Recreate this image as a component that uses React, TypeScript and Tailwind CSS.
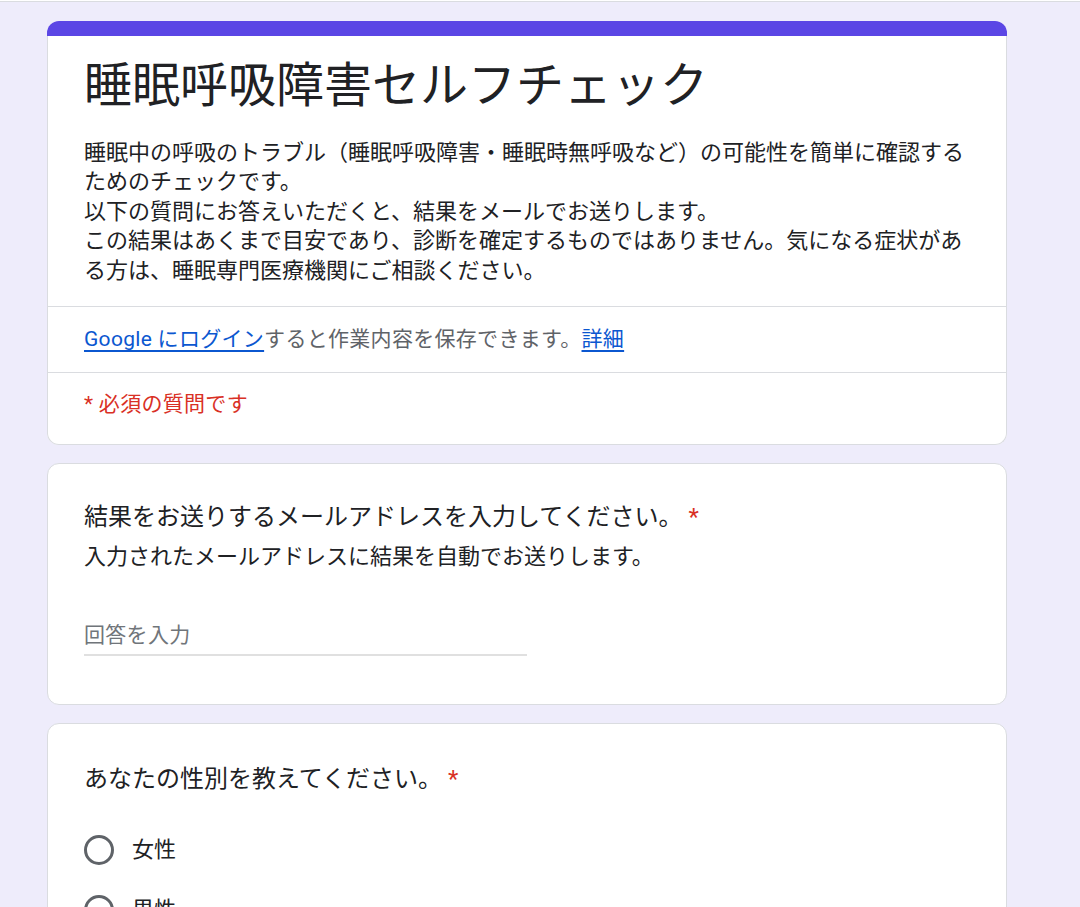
const font = { fontFamily: 'Roboto, "Noto Sans CJK JP", sans-serif' }

const Radio = ({ label }: { label: string }) => {
  return (
    <div className="flex items-center h-[48px]">
      <div className="w-[30px] h-[30px] rounded-full border-[3px] border-[#5f6368] shrink-0" />
      <span className="ml-[18px] text-[22px] leading-[30px] text-[#202124]">{label}</span>
    </div>
  )
}

const App = () => {
  return (
    <div className="min-h-screen bg-[#eeecfb]" style={font}>
      {/* top edge */}
      <div className="h-px bg-white" />
      <div className="h-px bg-[#dadce0]" />

      <div className="pl-[47px] pt-[19px] pb-10 flex flex-col gap-[18px]">
        {/* header card */}
        <div className="w-[960px] bg-white rounded-[12px]">
          <div className="h-[15px] bg-[#5b46e5] rounded-t-[12px]" />
          <div className="border border-t-0 border-[#dadce0] rounded-b-[12px]">
            <div className="px-[36px] pt-[20px] pb-[21px]">
              <h1 className="text-[48px] leading-[60px] text-[#202124]">睡眠呼吸障害セルフチェック</h1>
              <p className="mt-[22px] text-[22px] leading-[29.4px] text-[#202124]">
                睡眠中の呼吸のトラブル（睡眠呼吸障害・睡眠時無呼吸など）の可能性を簡単に確認するためのチェックです。
                <br />
                以下の質問にお答えいただくと、結果をメールでお送りします。
                <br />
                この結果はあくまで目安であり、診断を確定するものではありません。気になる症状がある方は、睡眠専門医療機関にご相談ください。
              </p>
            </div>
            <div className="border-t border-[#dadce0] px-[36px] py-[17px] text-[21px] leading-[31px] tracking-[0.3px] text-[#5f6368]">
              <a className="text-[#0b57d0] underline underline-offset-[4px]">Google にログイン</a>
              すると作業内容を保存できます。
              <a className="text-[#0b57d0] underline underline-offset-[4px]">詳細</a>
            </div>
            <div className="border-t border-[#dadce0] px-[36px] pt-[16px] pb-[25px] text-[21px] leading-[30px] tracking-[0.3px] text-[#d93025]">
              * 必須の質問です
            </div>
          </div>
        </div>

        {/* email question */}
        <div className="w-[960px] bg-white rounded-[12px] border border-[#dadce0] px-[36px] pt-[35px] pb-[48px]">
          <div className="text-[24px] leading-[36px] text-[#202124]">
            結果をお送りするメールアドレスを入力してください。
            <span className="ml-[6px] text-[#d93025]">*</span>
          </div>
          <div className="mt-[7px] text-[22px] leading-[30px] text-[#202124]">
            入力されたメールアドレスに結果を自動でお送りします。
          </div>
          <div className="mt-[48px] w-1/2 pb-[4px] border-b-2 border-[#e0e0e0] text-[21px] leading-[30px] tracking-[0.3px] text-[#70757a]">
            回答を入力
          </div>
        </div>

        {/* gender question */}
        <div className="w-[960px] bg-white rounded-[12px] border border-[#dadce0] px-[36px] pt-[37px] pb-[36px]">
          <div className="text-[24px] leading-[36px] text-[#202124]">
            あなたの性別を教えてください。
            <span className="ml-[6px] text-[#d93025]">*</span>
          </div>
          <div className="mt-[29px] flex flex-col gap-[12px]">
            <Radio label="女性" />
            <Radio label="男性" />
          </div>
        </div>
      </div>
    </div>
  )
}

export default App
